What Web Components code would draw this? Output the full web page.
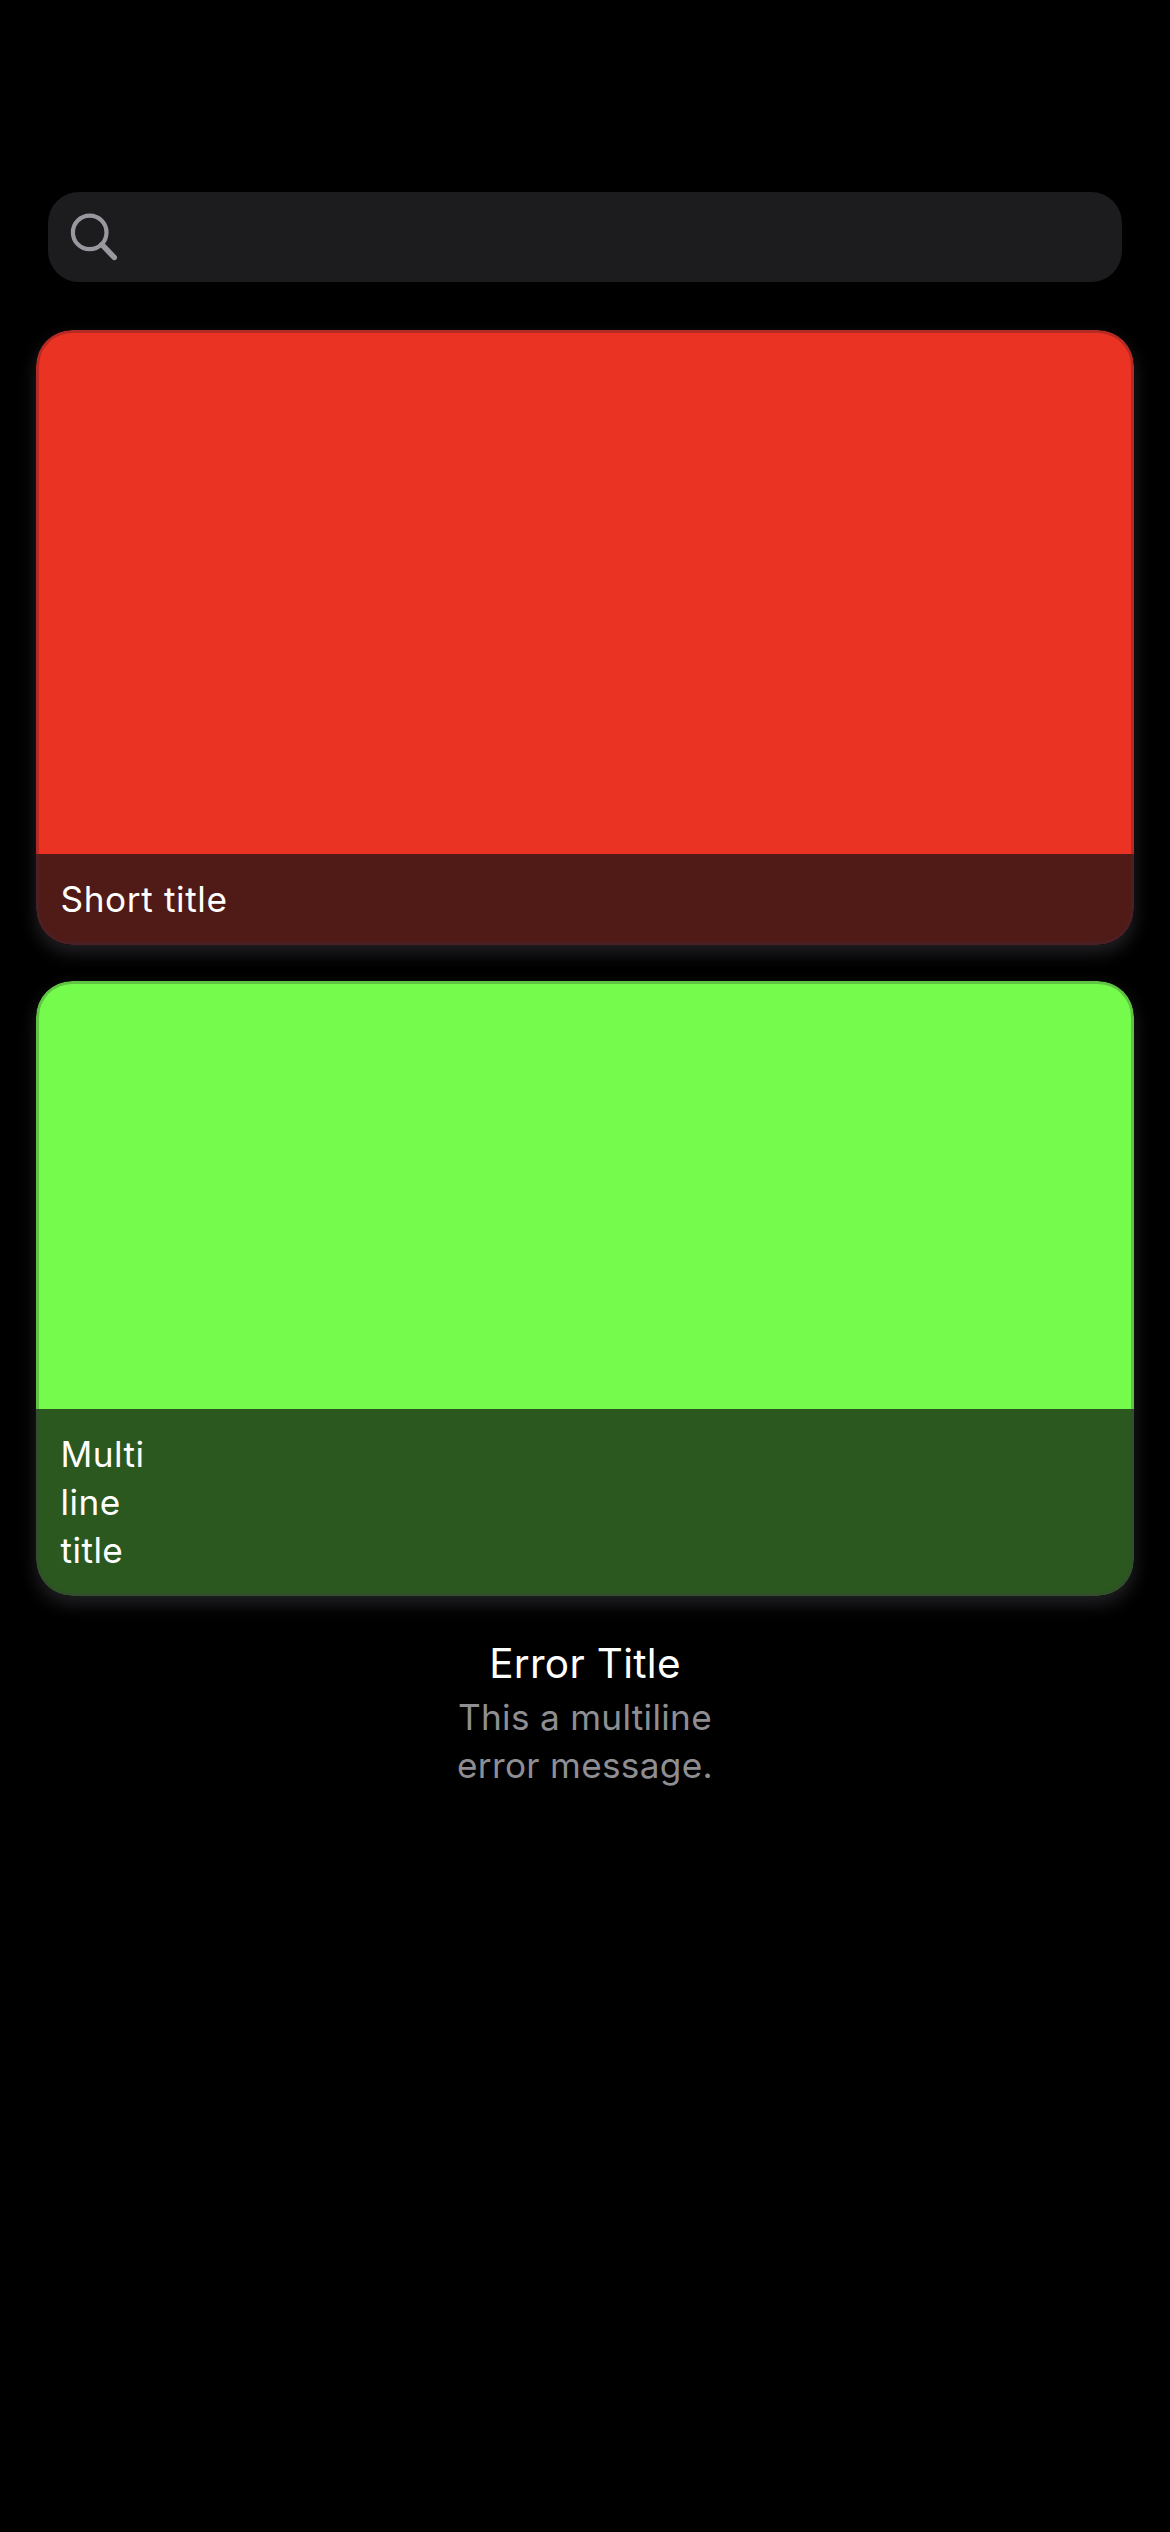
<!DOCTYPE html>
<html lang="en">
<head>
<meta charset="utf-8">
<title>Components</title>
<style>
html,body{margin:0;background:#000}
body{font-family:Inter,"Liberation Sans",sans-serif;color:#fff}
</style>
</head>
<body>
<app-screen>
  <search-field></search-field>
  <title-card style="--fill:#ea3323;--caption:#501a17;--edge:#b52a24;--caption-edge:#4a2024;--tracking:.62px">Short title</title-card>
  <title-card style="--fill:#75fb4c;--caption:#2b581f;--edge:#60c341;--caption-edge:#304f2a;--tracking:.45px">Multi<br>line<br>title</title-card>
  <error-message><span slot="title">Error Title</span>This a multiline<br>error message.</error-message>
</app-screen>
<script>
const define = (name, html) => customElements.define(name, class extends HTMLElement {
  constructor() {
    super();
    this.attachShadow({mode: 'open'}).innerHTML = html;
  }
});

define('app-screen', `
<style>
:host{display:flex;flex-direction:column;gap:36px;box-sizing:border-box;width:1170px;height:2532px;padding:192px 36px 0;background:#000;overflow:hidden}
</style><slot></slot>`);

define('search-field', `
<style>
:host{display:flex;align-items:center;box-sizing:border-box;height:90px;margin:0 12px 12px;padding-left:18px;background:#1c1c1e;border-radius:31px}
svg{display:block;width:54px;height:54px}
</style>
<svg viewBox="0 0 54 54" fill="none" stroke="#98989f">
<circle cx="23.7" cy="22.4" r="16.8" stroke-width="4.2"/>
<path d="M36 34.6 48.2 47.4" stroke-width="5.6" stroke-linecap="round"/>
</svg>`);

define('title-card', `
<style>
:host{display:block;height:615px;border-radius:36px;box-shadow:0 8px 18px #222226}
.card{display:flex;flex-direction:column;height:100%;border-radius:36px;overflow:hidden}
.picture{flex:1;background:var(--fill);border:3px solid var(--edge);border-bottom:0;border-radius:36px 36px 0 0}
.caption{box-sizing:border-box;background:var(--caption);border:3px solid var(--caption-edge);border-top:0;border-radius:0 0 36px 36px;padding:21px 21.5px 19px;font-size:35.2px;line-height:48px;letter-spacing:var(--tracking)}
</style>
<div class="card"><div class="picture"></div><div class="caption"><slot></slot></div></div>`);

define('error-message', `
<style>
:host{display:flex;flex-direction:column;align-items:center;text-align:center;margin-top:3px}
.title{font-size:40.5px;line-height:58px;letter-spacing:.3px}
.message{font-size:35.2px;line-height:48px;letter-spacing:.3px;color:#8e8e93}
</style>
<div class="title"><slot name="title"></slot></div><div class="message"><slot></slot></div>`);
</script>
</body>
</html>
